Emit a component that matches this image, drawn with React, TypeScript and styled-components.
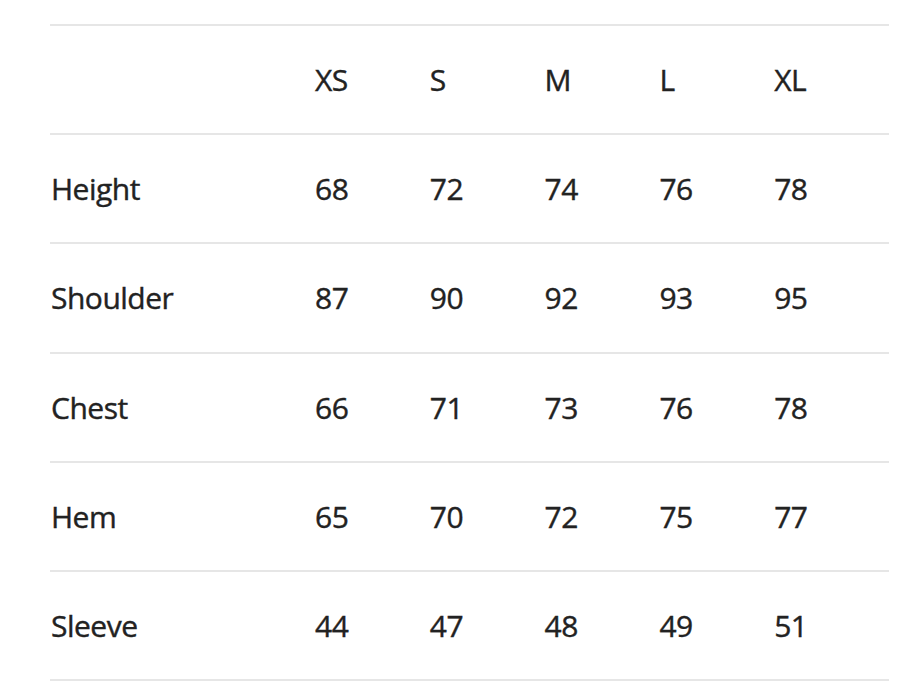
import React from 'react';
import styled, { createGlobalStyle } from 'styled-components';

const GlobalStyle = createGlobalStyle`
  body {
    margin: 0;
    background: #ffffff;
    font-family: 'Open Sans', 'Noto Sans', sans-serif;
  }
`;

const Wrapper = styled.div`
  padding: 24px 11px 0 50px;
`;

const Table = styled.div`
  display: flex;
  flex-direction: column;
  border-bottom: 2px solid #e6e6e6;
`;

const Row = styled.div`
  display: grid;
  grid-template-columns: 265px repeat(5, 1fr);
  align-items: center;
  height: 109.2px;
  box-sizing: border-box;
  border-top: 2px solid #e6e6e6;
`;

const Cell = styled.div<{ $label?: boolean }>`
  font-size: 30px;
  color: #222;
  letter-spacing: -0.5px;
  -webkit-text-stroke: 0.4px #222;
  padding-left: ${({ $label }) => ($label ? '1px' : '0')};
`;

const sizes = ['XS', 'S', 'M', 'L', 'XL'];

const rows: { name: string; values: number[] }[] = [
  { name: 'Height', values: [68, 72, 74, 76, 78] },
  { name: 'Shoulder', values: [87, 90, 92, 93, 95] },
  { name: 'Chest', values: [66, 71, 73, 76, 78] },
  { name: 'Hem', values: [65, 70, 72, 75, 77] },
  { name: 'Sleeve', values: [44, 47, 48, 49, 51] },
];

const App: React.FC = () => {
  return (
    <>
      <GlobalStyle />
      <Wrapper>
        <Table>
          <Row>
            <Cell $label />
            {sizes.map((s) => (
              <Cell key={s}>{s}</Cell>
            ))}
          </Row>
          {rows.map((r) => (
            <Row key={r.name}>
              <Cell $label>{r.name}</Cell>
              {r.values.map((v, i) => (
                <Cell key={i}>{v}</Cell>
              ))}
            </Row>
          ))}
        </Table>
      </Wrapper>
    </>
  );
};

export default App;
